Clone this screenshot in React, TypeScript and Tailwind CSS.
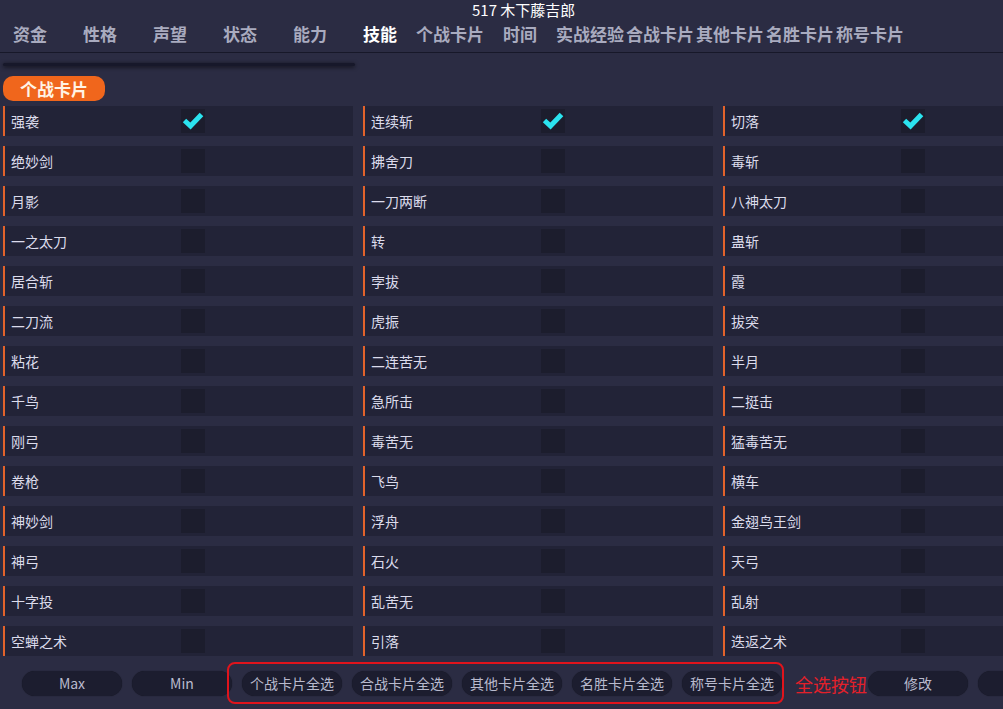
import { useState } from "react";

const tabs = [
  "资金",
  "性格",
  "声望",
  "状态",
  "能力",
  "技能",
  "个战卡片",
  "时间",
  "实战经验",
  "合战卡片",
  "其他卡片",
  "名胜卡片",
  "称号卡片",
];

// 三列技能卡片，按行排列
const rows: [string, string, string][] = [
  ["强袭", "连续斩", "切落"],
  ["绝妙剑", "拂舍刀", "毒斩"],
  ["月影", "一刀两断", "八神太刀"],
  ["一之太刀", "转", "蛊斩"],
  ["居合斩", "孛拔", "霞"],
  ["二刀流", "虎振", "拔突"],
  ["粘花", "二连苦无", "半月"],
  ["千鸟", "急所击", "二挺击"],
  ["刚弓", "毒苦无", "猛毒苦无"],
  ["卷枪", "飞鸟", "横车"],
  ["神妙剑", "浮舟", "金翅鸟王剑"],
  ["神弓", "石火", "天弓"],
  ["十字投", "乱苦无", "乱射"],
  ["空蝉之术", "引落", "迭返之术"],
];

const selectButtons = ["个战卡片全选", "合战卡片全选", "其他卡片全选", "名胜卡片全选", "称号卡片全选"];

function Check() {
  return (
    <svg viewBox="0 0 24 24" className="h-[24px] w-[24px]">
      <path d="M3.5 11.5 L9.5 17 L20.5 5.5" fill="none" stroke="#2be3f0" strokeWidth="5" strokeLinejoin="miter" />
    </svg>
  );
}

function SkillRow({ name, checked, onToggle }: { name: string; checked: boolean; onToggle: () => void }) {
  return (
    <div className="flex h-[30px] items-center border-l-2 border-[#e2632b] bg-[#222337]">
      <span className="w-[176px] pl-[6px] text-[14px] text-[#dcdcec]">{name}</span>
      <button
        onClick={onToggle}
        className="flex h-[24px] w-[24px] items-center justify-center bg-[#1c1d2d]"
      >
        {checked && <Check />}
      </button>
    </div>
  );
}

function PillButton({ label }: { label: string }) {
  return (
    <button className="h-[25px] w-[100px] shrink-0 rounded-full bg-[#1c1d2f] text-[14px] text-[#b9bacd] shadow-[0_0_1px_rgba(0,0,0,0.6)]">
      {label}
    </button>
  );
}

export default function App() {
  const [checked, setChecked] = useState<Record<string, boolean>>({
    强袭: true,
    连续斩: true,
    切落: true,
  });

  return (
    <div
      className="relative h-[709px] w-[1003px] overflow-hidden bg-[#2b2c43] text-white"
      style={{ fontFamily: '"Noto Sans CJK SC", "Noto Sans", sans-serif' }}
    >
      <div className="h-[19px] pl-[472px] pt-px text-[15px] leading-[18px] text-white">517 木下藤吉郎</div>

      <div className="ml-[-5px] flex h-[34px] items-center border-b border-[#171829] pb-[3px]">
        {tabs.map((t) => (
          <div
            key={t}
            className={
              t === "技能"
                ? "w-[70px] shrink-0 text-center text-[17px] font-bold text-white"
                : "w-[70px] shrink-0 text-center text-[17px] font-bold text-[#a9abbf]"
            }
          >
            {t}
          </div>
        ))}
      </div>

      <div className="ml-[3px] mt-[10px] h-[3px] w-[352px] rounded-full bg-[#17182a] shadow-[0_1px_4px_rgba(0,0,0,0.7)]" />

      <div className="ml-[3px] mt-[10px] flex h-[25px] w-[102px] items-center justify-center rounded-[10px] bg-[#f0661c] text-[17px] font-bold text-[#fff4e6]">
        个战卡片
      </div>

      <div className="ml-[3px] mt-[5px] grid grid-cols-[350px_350px_350px] gap-x-[10px] gap-y-[10px]">
        {rows.flatMap((r) =>
          r.map((name) => (
            <SkillRow
              key={name}
              name={name}
              checked={!!checked[name]}
              onToggle={() => setChecked((c) => ({ ...c, [name]: !c[name] }))}
            />
          ))
        )}
      </div>

      <div className="ml-[22px] mt-[15px] flex items-center gap-[10px]">
        <PillButton label="Max" />
        <PillButton label="Min" />
        {selectButtons.map((b) => (
          <PillButton key={b} label={b} />
        ))}
        <div className="ml-[66px]" />
        <PillButton label="修改" />
        <PillButton label="" />
      </div>

      {/* 标注：红框和说明文字 */}
      <div className="pointer-events-none absolute left-[227px] top-[662px] h-[42px] w-[557px] rounded-[8px] border-2 border-[#e0141c]" />
      <div className="pointer-events-none absolute left-[795px] top-[672px] text-[18px] leading-[25px] text-[#e4202a]">
        全选按钮
      </div>
    </div>
  );
}
